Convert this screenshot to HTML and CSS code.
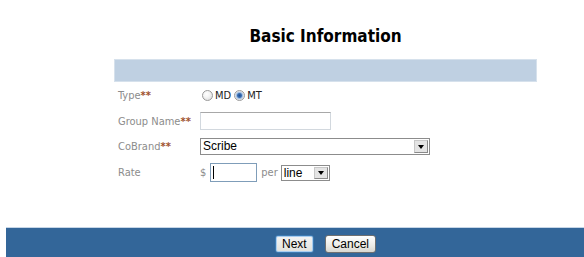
FILE: index.html
```html
<!DOCTYPE html>
<html>
<head>
    <link rel="stylesheet" href="styles.css">
</head>
<body>
    <div class="page">
        <h1 class="title">Basic Information</h1>
        <div class="section-bar"></div>

        <div class="form-grid">
            <div class="field-label">Type<span class="req">**</span></div>
            <div class="field">
                <input type="radio" name="type" class="radio" id="typeMD"><label for="typeMD" class="radio-text">MD</label>
                <input type="radio" name="type" class="radio" id="typeMT" checked><label for="typeMT" class="radio-text">MT</label>
            </div>

            <div class="field-label">Group Name<span class="req">**</span></div>
            <div class="field">
                <input type="text" class="text-input group-name">
            </div>

            <div class="field-label">CoBrand<span class="req">**</span></div>
            <div class="field">
                <span class="dropdown cobrand">
                    <select><option>Scribe</option></select>
                    <span class="drop-btn"><span class="arrow"></span></span>
                </span>
            </div>

            <div class="field-label">Rate</div>
            <div class="field">
                <span class="unit">$</span>
                <span class="rate-field">
                    <input type="text" class="rate-input">
                    <span class="caret"></span>
                </span>
                <span class="unit per">per</span>
                <span class="dropdown per-select">
                    <select><option>line</option></select>
                    <span class="drop-btn"><span class="arrow"></span></span>
                </span>
            </div>
        </div>

        <div class="footer">
            <div class="footer-inner">
                <button class="btn btn-default">Next</button>
                <button class="btn">Cancel</button>
            </div>
        </div>
    </div>
</body>
</html>
```

FILE: styles.css
```css
html, body {
    margin: 0;
    padding: 0;
    background: #fff;
}
body {
    font-family: "DejaVu Sans Condensed", "DejaVu Sans", sans-serif;
    font-size: 11px;
    color: #000;
}
.page {
    display: flex;
    flex-direction: column;
    min-height: 257px;
    width: 584px;
}
.title {
    margin: 0;
    padding-top: 26px;
    margin-left: 114px;
    width: 423px;
    font-size: 17px;
    line-height: 20px;
    font-weight: bold;
    text-align: center;
}
.section-bar {
    margin: 13px 0 0 114px;
    width: 421px;
    height: 21px;
    background-color: #bfd0e2;
    border: 1px solid #d6e1ec;
}
.form-grid {
    margin-left: 114px;
    padding-left: 4px;
    display: grid;
    grid-template-columns: 82px auto;
    grid-template-rows: 27px 24px 26px 27px;
    align-items: center;
}
.field-label {
    color: #8c8c8c;
}
.req {
    color: #a0522d;
    font-weight: bold;
}
.field {
    display: flex;
    align-items: center;
}

/* radios */
.radio {
    -webkit-appearance: none;
    appearance: none;
    width: 11px;
    height: 11px;
    margin: 0 2px 0 2px;
    border: 1px solid #9a9a9a;
    border-radius: 50%;
    background: radial-gradient(circle at 40% 35%, #ffffff 0, #f4f4f4 40%, #d6d6d6 100%);
    box-sizing: border-box;
}
.radio:checked {
    background: radial-gradient(circle at 50% 50%, #1f4f8f 0, #3a6fb5 2px, #9fbde0 3px, #eeeeee 4.5px);
}
.radio-text {
    color: #222;
    margin-right: 1px;
}

/* text inputs */
.text-input {
    box-sizing: border-box;
    height: 18px;
    margin: 0;
    padding: 0 2px;
    border: 1px solid #d2d8de;
    border-top-color: #a8a8a8;
    background: #fff;
    font-family: "Liberation Sans", Arial, sans-serif;
    font-size: 12px;
}
.group-name {
    width: 131px;
}

/* dropdowns */
.dropdown {
    display: inline-flex;
    box-sizing: border-box;
    border: 1px solid #8c8c8c;
    background: #fff;
}
.dropdown select {
    -webkit-appearance: none;
    appearance: none;
    flex: 1;
    min-width: 0;
    border: 0;
    margin: 0;
    padding: 0 0 0 2px;
    background: #fff;
    font-family: "Liberation Sans", Arial, sans-serif;
    font-size: 12px;
    color: #000;
    outline: none;
}
.cobrand {
    width: 230px;
    height: 17px;
}
.per-select {
    width: 49px;
    height: 16px;
    margin-left: 3px;
}
.drop-btn {
    box-sizing: border-box;
    width: 14px;
    margin: 1px;
    border: 1px solid #8a8a8a;
    border-top-color: #c8c8c8;
    border-left-color: #c8c8c8;
    background: #e4e4e4;
    display: flex;
    align-items: center;
    justify-content: center;
}
.arrow {
    width: 0;
    height: 0;
    border-left: 3px solid transparent;
    border-right: 3px solid transparent;
    border-top: 4px solid #000;
    margin-top: 1px;
}

/* rate */
.unit {
    color: #8c8c8c;
}
.rate-field {
    position: relative;
    display: inline-block;
    margin-left: 4px;
    height: 19px;
}
.rate-input {
    box-sizing: border-box;
    width: 47px;
    height: 19px;
    margin: 0;
    border: 1px solid #7f9db9;
    background: #fff;
}
.caret {
    position: absolute;
    left: 3px;
    top: 3px;
    width: 1px;
    height: 13px;
    background: #000;
}
.per {
    margin-left: 4px;
}

/* footer */
.footer {
    margin-top: auto;
    margin-left: 6px;
    height: 29px;
    background-color: #336699;
    border-top: 1px solid #c6d6e7;
}
.footer-inner {
    margin-left: 108px;
    width: 423px;
    padding-top: 7px;
    display: flex;
    justify-content: center;
    gap: 11px;
}
.btn {
    box-sizing: border-box;
    height: 18px;
    padding: 0 6px;
    margin: 0;
    border: 1px solid #707070;
    border-radius: 3px;
    background: linear-gradient(#ffffff, #ecebe6 60%, #d8d7d0);
    font-family: "Liberation Sans", Arial, sans-serif;
    font-size: 12px;
    color: #000;
}
.btn-default {
    border-color: #3d7bb3;
    box-shadow: inset 0 0 0 1px #a9cdf0;
    background: linear-gradient(#f4f4f4, #e2e2dc);
}
```
